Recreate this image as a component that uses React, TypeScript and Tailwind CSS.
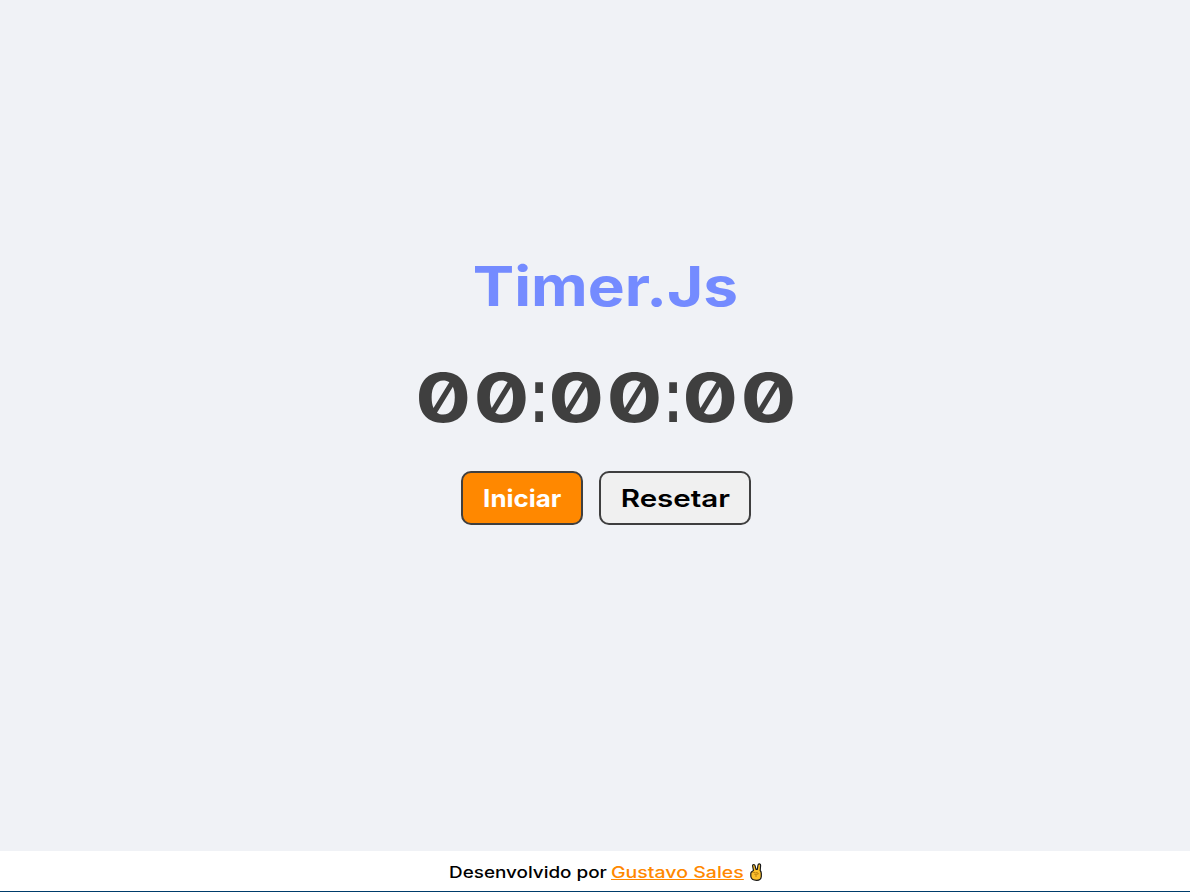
function Pair() {
  return (
    <span className="flex w-[117px] justify-center">
      <span className="inline-block scale-x-[1.22] pl-[1.5px] font-['Inter',sans-serif] text-[68px] font-bold tracking-[2px] [font-feature-settings:'zero']">00</span>
    </span>
  );
}

function Colon() {
  return (
    <span className="flex w-[16.5px] justify-center">
      <span className="inline-block scale-x-[0.7] font-['Liberation_Sans',sans-serif] text-[78px] font-bold">:</span>
    </span>
  );
}

function VictoryHand() {
  return (
    <svg className="h-[18px] w-3" viewBox="0 0 12 18" role="img" aria-label="✌️">
      <path d="M2 8.6 3.5 7.4 2.6 3Q2.5 1.5 3.7 1.5 4.8 1.5 5.1 2.8L6 6.3 7.3 6.3 8 2Q8.2.7 9.4.8 10.8 1 10.6 2.5L10.2 7.5Q11.3 8.7 11.3 10.5V13.5Q11 17.3 6.7 17.4 1.2 17.4.8 13.3V10.4Q.8 9.2 2 8.6Z" fill="#fbc02d" stroke="#181818" strokeWidth="1.2" strokeLinejoin="round" />
      <path d="M2.3 9.6Q4 8.8 5.4 9.8M5.7 9.6Q8 9 8.4 11 6 11.4 4.2 11.2M6 11.5V14" fill="none" stroke="#a96e08" strokeWidth=".7" />
    </svg>
  );
}

export default function App() {
  return (
    <div className="flex h-[892px] w-full flex-col overflow-hidden bg-[#f0f2f6] font-['Inter',sans-serif]">
      <main className="flex flex-1 flex-col items-center pl-[22px] pt-[246px]">
        <h1 className="flex h-20 items-center whitespace-nowrap pr-0.5 text-[55px] font-bold leading-none text-[#748bff]">
          <span className="inline-block scale-x-[1.13]">Timer.Js</span>
        </h1>
        <div className="mt-[29px] flex h-20 items-baseline whitespace-nowrap leading-[80px] text-[#3f3f3f]">
          <Pair /><Colon /><Pair /><Colon /><Pair />
        </div>
        <div className="mt-9 flex gap-4">
          <button className="h-[54px] w-[122px] rounded-[10px] border-2 border-[#3f3f3f] bg-[#ff8800] pt-0.5 text-2xl font-bold leading-none text-white">
            <span className="inline-block scale-x-[1.08]">Iniciar</span>
          </button>
          <button className="h-[54px] w-[152px] rounded-[10px] border-2 border-[#3f3f3f] bg-[#f0f0f0] pt-0.5 text-2xl font-semibold leading-none text-black">
            <span className="inline-block scale-x-[1.23]">Resetar</span>
          </button>
        </div>
      </main>
      <footer className="flex h-[41px] items-center border-b border-[#003c6b] bg-white pl-[449px] pt-0.5 text-base font-medium">
        <span className="w-[162px] whitespace-nowrap"><span className="inline-block origin-left scale-x-[1.18]">Desenvolvido por</span></span>
        <a href="#" className="w-[139px] whitespace-nowrap text-[#ff8800]"><span className="inline-block origin-left scale-x-[1.22] underline">Gustavo Sales</span></a>
        <VictoryHand />
      </footer>
    </div>
  );
}
